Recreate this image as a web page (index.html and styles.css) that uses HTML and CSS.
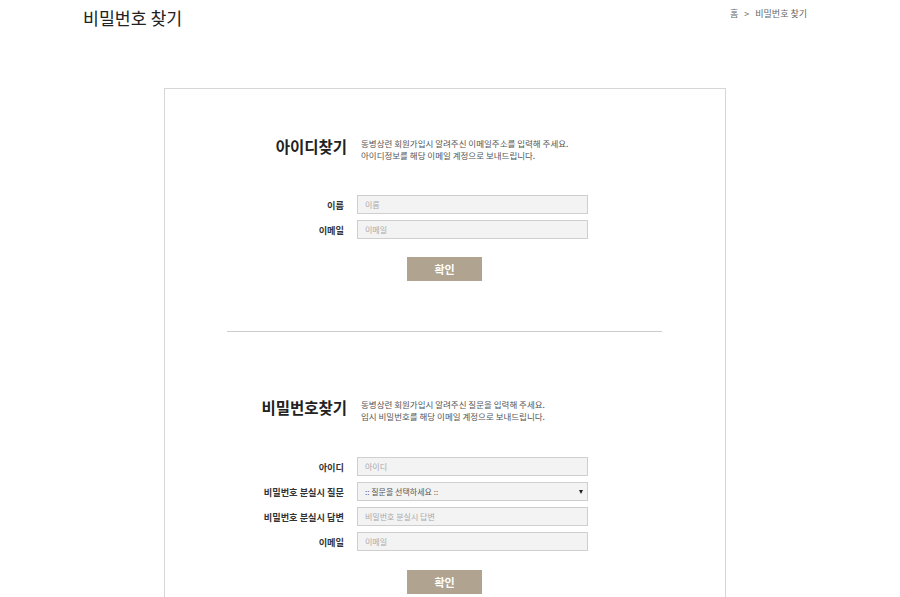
FILE: index.html
```html
<!DOCTYPE html>
<html>
<head>
  <meta charset="utf-8">
  <title>비밀번호 찾기</title>
  <link rel="stylesheet" href="styles.css">
</head>
<body>
  <div class="wrap">
    <div class="top">
      <h1 class="page-title">비밀번호 찾기</h1>
      <div class="crumb">홈 <span class="sep">&gt;</span> 비밀번호 찾기</div>
    </div>

    <div class="box">
      <div class="sec sec-id">
        <div class="sec-head">
          <h2>아이디찾기</h2>
          <p class="desc">동병상련 회원가입시 알려주신 이메일주소를 입력해 주세요.<br>아이디정보를 해당 이메일 계정으로 보내드립니다.</p>
        </div>
        <div class="rows">
          <div class="row">
            <label for="id-name">이름</label>
            <input id="id-name" type="text" placeholder="이름">
          </div>
          <div class="row">
            <label for="id-mail">이메일</label>
            <input id="id-mail" type="text" placeholder="이메일">
          </div>
        </div>
        <div class="btns"><button class="btn">확인</button></div>
      </div>

      <hr class="line">

      <div class="sec sec-pw">
        <div class="sec-head">
          <h2>비밀번호찾기</h2>
          <p class="desc">동병상련 회원가입시 알려주신 질문을 입력해 주세요.<br>임시 비밀번호를 해당 이메일 계정으로 보내드립니다.</p>
        </div>
        <div class="rows rows-pw">
          <div class="row">
            <label for="pw-id">아이디</label>
            <input id="pw-id" type="text" placeholder="아이디">
          </div>
          <div class="row">
            <label for="pw-q">비밀번호 분실시 질문</label>
            <div class="sel">
              <select id="pw-q">
                <option>:: 질문을 선택하세요 ::</option>
                <option>기억에 남는 추억의 장소는?</option>
                <option>나의 보물 제1호는?</option>
              </select>
            </div>
          </div>
          <div class="row">
            <label for="pw-a">비밀번호 분실시 답변</label>
            <input id="pw-a" type="text" placeholder="비밀번호 분실시 답변">
          </div>
          <div class="row">
            <label for="pw-mail">이메일</label>
            <input id="pw-mail" type="text" placeholder="이메일">
          </div>
        </div>
        <div class="btns btns-pw"><button class="btn">확인</button></div>
      </div>
    </div>
  </div>
</body>
</html>
```

FILE: styles.css
```css
body {
  margin: 0;
  background: #fff;
  font-family: "Noto Sans CJK KR", "Noto Sans", sans-serif;
  color: #333;
  overflow: hidden;
}

.wrap {
  width: 724px;
  margin-left: 83px;
}

.top {
  display: flex;
  justify-content: space-between;
  align-items: flex-start;
  height: 88px;
}

.page-title {
  margin: 6px 0 0;
  font-size: 17.3px;
  font-weight: normal;
  line-height: 24px;
  color: #222;
}

.crumb {
  margin-top: 7px;
  font-size: 9px;
  line-height: 14px;
  color: #666;
}

.crumb .sep {
  margin: 0 4px;
}

.box {
  width: 560px;
  margin-left: 81px;
  border: 1px solid #d6d6d6;
  padding-top: 48px;
  height: 600px;
}

.sec-head {
  display: flex;
  align-items: flex-start;
}

.sec-head h2 {
  width: 182px;
  margin: 0;
  text-align: right;
  font-size: 15.5px;
  line-height: 18px;
  font-weight: bold;
  color: #222;
}

.desc {
  margin: 0 0 0 14px;
  padding-top: 1px;
  font-size: 8.5px;
  line-height: 11.5px;
  color: #555;
}

.rows {
  display: flex;
  flex-direction: column;
  gap: 6px;
  margin-top: 34px;
}

.rows-pw {
  margin-top: 35px;
}

.row {
  display: flex;
  align-items: center;
  height: 19px;
}

.row label {
  width: 179px;
  margin-right: 13px;
  text-align: right;
  font-size: 9.2px;
  font-weight: bold;
  color: #333;
}

.row input,
.sel select {
  box-sizing: border-box;
  display: block;
  width: 231px;
  height: 19px;
  margin: 0;
  padding: 0 7px;
  border: 1px solid #cfcfcf;
  background: #f3f3f3;
  font-family: inherit;
  font-size: 8px;
  color: #555;
  outline: none;
}

.row input::placeholder {
  color: #aaa;
}

.sel {
  position: relative;
  height: 19px;
}

.sel select {
  appearance: none;
  -webkit-appearance: none;
  border-radius: 0;
  color: #555;
}

.sel:after {
  content: "";
  position: absolute;
  right: 5px;
  top: 8px;
  border-left: 2.5px solid transparent;
  border-right: 2.5px solid transparent;
  border-top: 4px solid #222;
}

.btns {
  margin-top: 18px;
  padding-left: 242px;
}

.btns-pw {
  margin-top: 19px;
}

.btn {
  display: block;
  width: 75px;
  height: 24px;
  padding: 0;
  border: none;
  background: #b0a490;
  color: #fff;
  font-family: inherit;
  font-size: 11px;
  font-weight: bold;
  cursor: pointer;
}

.line {
  width: 435px;
  margin: 50px 0 66px 62px;
  border: none;
  border-top: 1px solid #ccc;
  height: 0;
}
```
